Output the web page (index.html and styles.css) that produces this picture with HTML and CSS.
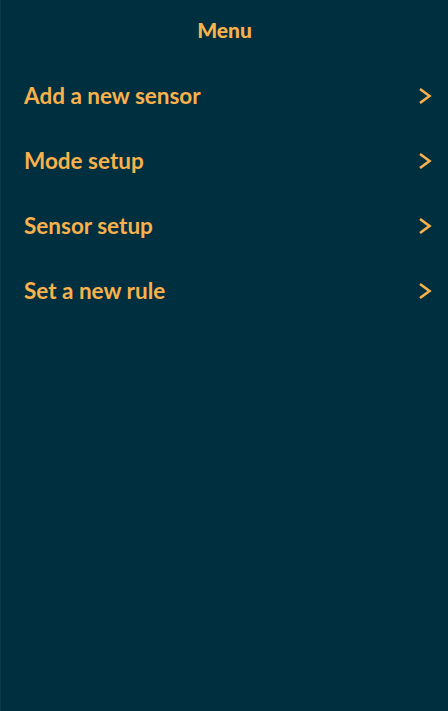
FILE: index.html
```html
<!DOCTYPE html>
<html>
<head>
<meta charset="utf-8">
<link rel="stylesheet" href="styles.css">
</head>
<body>
<div class="screen">
  <header class="title">Menu</header>
  <ul class="menu">
    <li class="item"><span>Add a new sensor</span><svg class="chev" width="14" height="18" viewBox="0 0 14 18"><path d="M2 2 L11.5 9 L2 16" fill="none" stroke="#f9b14c" stroke-width="2.6"/></svg></li>
    <li class="item"><span>Mode setup</span><svg class="chev" width="14" height="18" viewBox="0 0 14 18"><path d="M2 2 L11.5 9 L2 16" fill="none" stroke="#f9b14c" stroke-width="2.6"/></svg></li>
    <li class="item"><span>Sensor setup</span><svg class="chev" width="14" height="18" viewBox="0 0 14 18"><path d="M2 2 L11.5 9 L2 16" fill="none" stroke="#f9b14c" stroke-width="2.6"/></svg></li>
    <li class="item"><span>Set a new rule</span><svg class="chev" width="14" height="18" viewBox="0 0 14 18"><path d="M2 2 L11.5 9 L2 16" fill="none" stroke="#f9b14c" stroke-width="2.6"/></svg></li>
  </ul>
</div>
</body>
</html>
```
FILE: styles.css
```css
html, body {
  margin: 0;
  padding: 0;
  height: 100%;
  background: #002f40;
}
.screen {
  box-sizing: border-box;
  height: 711px;
  border-left: 1px solid #0b3b4b;
  background: #002f40;
  color: #f9b14c;
  font-family: Lato, "Noto Sans", sans-serif;
  font-weight: 700;
}
.title {
  text-align: center;
  font-size: 21px;
  font-weight: 900;
  padding-top: 18px;
  line-height: 24px;
}
.menu {
  list-style: none;
  margin: 0;
  padding: 0;
  margin-top: 21px;
}
.item {
  display: flex;
  align-items: center;
  justify-content: space-between;
  height: 65px;
  padding: 0 16px 0 23px;
  font-size: 22.5px;
}
.item span {
  line-height: 26px;
}
.chev {
  display: block;
}
```
